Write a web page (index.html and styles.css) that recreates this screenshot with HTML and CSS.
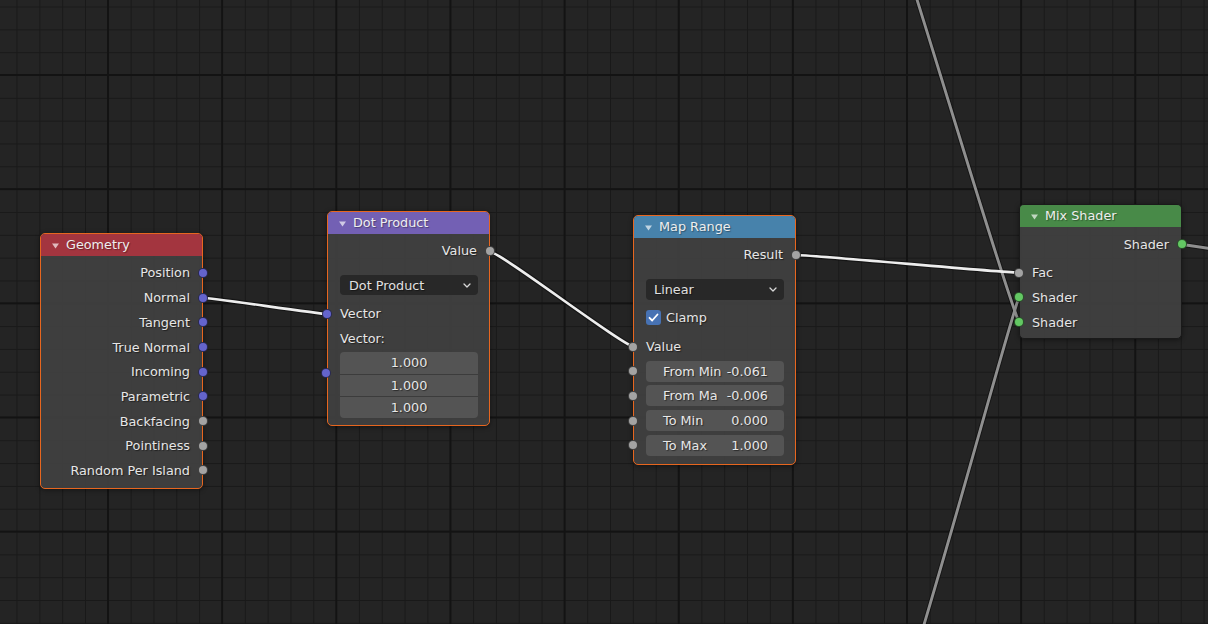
FILE: index.html
```html
<!DOCTYPE html>
<html>
<head>
<meta charset="utf-8">
<title>Node Editor</title>
<link rel="stylesheet" href="styles.css">
</head>
<body>
<div class="canvas">
  <svg class="wires" width="1208" height="624" viewBox="0 0 1208 624">
    <g class="outline">
      <path d="M914 -10 C961 140, 1006 292, 1019 322"/>
      <path d="M923 628 C969 474, 1006 335, 1019 297"/>
      <path d="M1181 244.3 L1215 249.3"/>
      <path d="M202.7 297.7 C212 297.7, 318 314, 327.3 314"/>
      <path d="M490 251.7 C500 251.7, 624 346.7, 634 346.7"/>
      <path d="M795.7 255 C812 255, 1003 272.7, 1019 272.7"/>
    </g>
    <g class="grey">
      <path d="M914 -10 C961 140, 1006 292, 1019 322"/>
      <path d="M923 628 C969 474, 1006 335, 1019 297"/>
      <path d="M1181 244.3 L1215 249.3"/>
    </g>
    <g class="white">
      <path d="M202.7 297.7 C212 297.7, 318 314, 327.3 314"/>
      <path d="M490 251.7 C500 251.7, 624 346.7, 634 346.7"/>
      <path d="M795.7 255 C812 255, 1003 272.7, 1019 272.7"/>
    </g>
  </svg>

  <div class="node geometry selected">
    <div class="header">
      <svg class="tri" width="7" height="6" viewBox="0 0 7 6"><polygon points="0,0.5 7,0.5 3.5,5.5"/></svg>
      <span class="title">Geometry</span>
    </div>
    <div class="body">
      <div class="row out">Position<span class="sock vec"></span></div>
      <div class="row out">Normal<span class="sock vec"></span></div>
      <div class="row out">Tangent<span class="sock vec"></span></div>
      <div class="row out">True Normal<span class="sock vec"></span></div>
      <div class="row out">Incoming<span class="sock vec"></span></div>
      <div class="row out">Parametric<span class="sock vec"></span></div>
      <div class="row out">Backfacing<span class="sock flt"></span></div>
      <div class="row out">Pointiness<span class="sock flt"></span></div>
      <div class="row out">Random Per Island<span class="sock flt"></span></div>
    </div>
  </div>

  <div class="node dot selected">
    <div class="header">
      <svg class="tri" width="7" height="6" viewBox="0 0 7 6"><polygon points="0,0.5 7,0.5 3.5,5.5"/></svg>
      <span class="title">Dot Product</span>
    </div>
    <div class="body">
      <div class="row out">Value<span class="sock flt"></span></div>
      <div class="dropdown dd-dot">
        <span>Dot Product</span>
        <svg class="chev" width="8" height="5" viewBox="0 0 8 5"><path d="M1 1 L4 4 L7 1"/></svg>
      </div>
      <div class="row in vec-in">Vector<span class="sock vec"></span></div>
      <div class="row label">Vector:</div>
      <div class="vfields">
        <div class="vfield">1.000</div>
        <div class="vfield">1.000<span class="sock vec"></span></div>
        <div class="vfield">1.000</div>
      </div>
    </div>
  </div>

  <div class="node map selected">
    <div class="header">
      <svg class="tri" width="7" height="6" viewBox="0 0 7 6"><polygon points="0,0.5 7,0.5 3.5,5.5"/></svg>
      <span class="title">Map Range</span>
    </div>
    <div class="body">
      <div class="row out">Result<span class="sock flt"></span></div>
      <div class="dropdown dd-map">
        <span>Linear</span>
        <svg class="chev" width="8" height="5" viewBox="0 0 8 5"><path d="M1 1 L4 4 L7 1"/></svg>
      </div>
      <div class="row check-row">
        <span class="checkbox"><svg width="15" height="15" viewBox="0 0 15 15"><path d="M3.5 7.8 L6.2 10.5 L11.5 4.5"/></svg></span>
        <span class="check-label">Clamp</span>
      </div>
      <div class="row in value-in">Value<span class="sock flt"></span></div>
      <div class="frow"><span class="sock flt"></span><div class="field"><span>From Min</span><span>-0.061</span></div></div>
      <div class="frow"><span class="sock flt"></span><div class="field"><span>From Ma</span><span>-0.006</span></div></div>
      <div class="frow"><span class="sock flt"></span><div class="field"><span>To Min</span><span>0.000</span></div></div>
      <div class="frow"><span class="sock flt"></span><div class="field"><span>To Max</span><span>1.000</span></div></div>
    </div>
  </div>

  <div class="node mix">
    <div class="header">
      <svg class="tri" width="7" height="6" viewBox="0 0 7 6"><polygon points="0,0.5 7,0.5 3.5,5.5"/></svg>
      <span class="title">Mix Shader</span>
    </div>
    <div class="body">
      <div class="row out">Shader<span class="sock shd"></span></div>
      <div class="row in fac-in">Fac<span class="sock flt"></span></div>
      <div class="row in">Shader<span class="sock shd"></span></div>
      <div class="row in">Shader<span class="sock shd"></span></div>
    </div>
  </div>
</div>
</body>
</html>
```

FILE: styles.css
```css
* { box-sizing: border-box; }

html, body {
  margin: 0;
  padding: 0;
  background: #232323;
}

body {
  font-family: "DejaVu Sans", "Liberation Sans", sans-serif;
  font-size: 12.8px;
  color: #e6e6e6;
}

.canvas {
  position: relative;
  width: 1208px;
  height: 624px;
  overflow: hidden;
  background-color: #242424;
  background-image:
    linear-gradient(to right, #131313 0, #131313 2px, transparent 2px),
    linear-gradient(to bottom, #131313 0, #131313 2px, transparent 2px),
    linear-gradient(to right, #191919 0, #191919 1px, transparent 1px),
    linear-gradient(to bottom, #191919 0, #191919 1px, transparent 1px);
  background-size:
    114.15px 114.15px,
    114.15px 114.15px,
    22.83px 22.83px,
    22.83px 22.83px;
  background-position:
    107px 0,
    0 74px,
    16.5px 0,
    0 6.5px;
}

.wires {
  position: absolute;
  left: 0;
  top: 0;
  z-index: 1;
}

.wires path {
  fill: none;
  stroke-linecap: round;
}

.wires .outline path {
  stroke: rgba(10, 10, 10, 0.55);
  stroke-width: 4.8;
}

.wires .grey path {
  stroke: #8f8f8f;
  stroke-width: 2.9;
}

.wires .white path {
  stroke: #ededed;
  stroke-width: 2.6;
}

/* Nodes */
.node {
  position: absolute;
  z-index: 2;
  width: 163px;
  border: 1px solid #1a1a1a;
  border-radius: 5px;
  background: rgba(64, 64, 64, 0.94);
  box-shadow: 0 1px 5px rgba(0, 0, 0, 0.45);
}

.node.selected {
  border-color: #e7661f;
}

.geometry { left: 40px; top: 233px; }
.dot      { left: 327px; top: 211px; }
.map      { left: 633px; top: 215px; }
.mix      { left: 1019px; top: 204px; }

.header {
  height: 22px;
  display: flex;
  align-items: center;
  padding-left: 11px;
  border-radius: 4px 4px 0 0;
  color: #eeeeee;
  text-shadow: 1px 1px 1px rgba(0, 0, 0, 0.35);
}

.geometry .header { background: #a3353f; }
.dot .header      { background: #7360b4; }
.map .header      { background: #4782ab; }
.mix .header      { background: #488a48; }

.tri {
  fill: rgba(255, 255, 255, 0.66);
  margin-right: 7px;
  margin-top: 1px;
}

.title {
  line-height: 22px;
}

.body {
  padding: 4.6px 0 5px;
}

.row {
  position: relative;
  height: 24.7px;
  display: flex;
  align-items: center;
  padding: 0 12px;
  white-space: nowrap;
  text-shadow: 1px 1px 1px rgba(0, 0, 0, 0.5);
}

.row.out { justify-content: flex-end; }
.row.in  { justify-content: flex-start; }

.sock {
  position: absolute;
  top: 50%;
  width: 10px;
  height: 10px;
  margin-top: -5px;
  border-radius: 50%;
  border: 1px solid rgba(0, 0, 0, 0.6);
}

.row.out .sock { right: -5.5px; }
.row.in .sock  { left: -6px; }

.sock.vec { background: #6464cc; }
.sock.flt { background: #a3a3a3; }
.sock.shd { background: #63c763; }

/* Dropdowns */
.dropdown {
  display: flex;
  align-items: center;
  justify-content: space-between;
  margin: 0 11px 0 12px;
  padding: 0 7px 0 9px;
  background: #282828;
  border-radius: 4px;
  color: #e0e0e0;
  text-shadow: 1px 1px 1px rgba(0, 0, 0, 0.45);
}

.dd-dot {
  height: 20px;
  margin-top: 12px;
}

.dd-map {
  height: 21px;
  margin-top: 12px;
  padding-left: 8px;
}

.chev path {
  fill: none;
  stroke: #d8d8d8;
  stroke-width: 1.3;
  stroke-linecap: round;
  stroke-linejoin: round;
}

/* Dot product vector */
.dot .body { padding-bottom: 7px; }

.vec-in { margin-top: 6px; }

.row.label {
  padding-left: 12px;
}

.vfields {
  margin: 1px 11px 0 12px;
  border-radius: 4px;
}

.vfield {
  position: relative;
  height: 22px;
  display: flex;
  align-items: center;
  justify-content: center;
  background: #545454;
  color: #e8e8e8;
  text-shadow: 1px 1px 1px rgba(0, 0, 0, 0.5);
}

.vfield:first-child { border-radius: 4px 4px 0 0; }
.vfield:last-child  { border-radius: 0 0 4px 4px; }
.vfield + .vfield   { border-top: 1px solid #3c3c3c; }

.vfield .sock {
  top: -1.5px;
  left: -19px;
}

/* Map range */
.map .body { padding-bottom: 6px; }

.check-row {
  height: 24px;
  margin-top: 5.3px;
}

.checkbox {
  width: 15px;
  height: 15px;
  border-radius: 3px;
  background: #4772b3;
  display: flex;
}

.checkbox path {
  fill: none;
  stroke: #ffffff;
  stroke-width: 1.8;
  stroke-linecap: round;
  stroke-linejoin: round;
}

.check-label {
  margin-left: 5px;
}

.value-in { margin-top: 4.7px; }

.frow {
  position: relative;
  height: 24.7px;
  display: flex;
  align-items: center;
  padding: 0 11px 0 12px;
}

.frow .sock { left: -6px; }

.field {
  flex: 1;
  height: 21px;
  display: flex;
  align-items: center;
  justify-content: space-between;
  padding: 0 16px 0 17px;
  background: #545454;
  border-radius: 4px;
  color: #e8e8e8;
  white-space: nowrap;
  text-shadow: 1px 1px 1px rgba(0, 0, 0, 0.5);
}

/* Mix shader */
.mix .body { padding: 5px 0 4px; }
.fac-in { margin-top: 3.6px; }
```
